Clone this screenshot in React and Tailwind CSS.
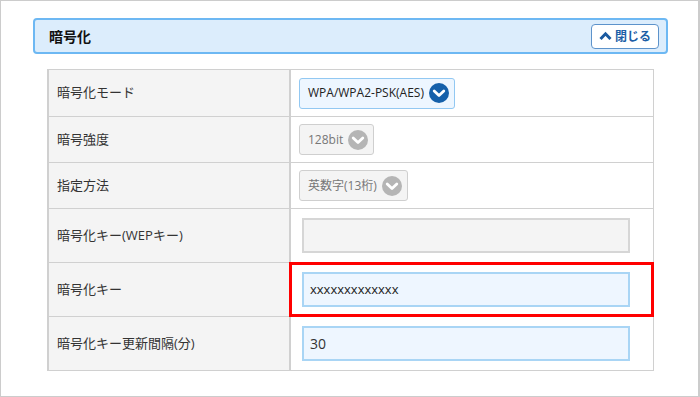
import React from 'react';

const FONT = { fontFamily: '"Open Sans", "Noto Sans CJK JP", sans-serif' };

const ChevronCircle = ({ active }) => (
  <svg width="20" height="20" viewBox="0 0 20 20" className="shrink-0">
    <circle cx="10" cy="10" r="10" fill={active ? '#1560aa' : '#b5b5b5'} />
    <polyline points="5.2,8 10,12.6 14.8,8" fill="none" stroke="#fff" strokeWidth="2.8" strokeLinecap="round" strokeLinejoin="round" />
  </svg>
);

const Select = ({ label, active }) => (
  <div className={`h-[31px] inline-flex items-center gap-[5px] pl-[8px] pr-[5px] rounded-[3px] border text-[12px] ${active ? 'bg-[#edf6ff] border-[#92c8f2] text-[#222]' : 'bg-[#f4f4f4] border-[#cfcfcf] text-[#777]'}`}>
    <span>{label}</span>
    <ChevronCircle active={active} />
  </div>
);

const Input = ({ value, disabled, mono }) => (
  <div className={`w-[328px] h-[35px] flex items-center px-[6px] border-2 ${disabled ? 'bg-[#f4f4f4] border-[#d6d6d6]' : 'bg-[#eef6ff] border-[#a9d5f5]'} ${mono ? 'text-[13px] text-[#222]' : 'text-[14px] text-[#333]'}`}>
    {value}
  </div>
);

const Row = ({ label, height, first, highlight, children }) => (
  <div className={`flex ${first ? '' : 'border-t border-[#d0d0d0]'}`} style={{ height }}>
    <div className="w-[242px] shrink-0 bg-[#f4f4f4] border-r-2 border-[#d0d0d0] flex items-center pl-[8px] text-[13px] text-[#333]">
      {label}
    </div>
    <div className="relative flex-1 flex items-center pl-[8px] bg-white">
      {children}
      {highlight && <div className="absolute -left-[2px] -right-px -top-px -bottom-px border-[3px] border-[#ff0000] pointer-events-none" />}
    </div>
  </div>
);

export default function App() {
  return (
    <div style={FONT} className="w-[700px] h-[397px] bg-white border border-[#cccccc] border-r-2 pt-[17px] pl-[32px] pr-[30px]">
      <div className="h-[36px] rounded-[4px] border-2 border-[#6db8f3] bg-[#dcedfc] flex items-center justify-between pl-[14px] pr-[7px]">
        <span className="text-[14px] font-bold text-[#111]" style={{ fontFamily: '"Noto Sans CJK JP", sans-serif' }}>暗号化</span>
        <button className="h-[25px] w-[68px] rounded-[4px] border border-[#5d93cb] bg-white flex items-center justify-center gap-[3px] text-[12px] font-bold text-[#1d5ea6]" style={{ fontFamily: '"Noto Sans CJK JP", sans-serif' }}>
          <svg width="13" height="10" viewBox="0 0 13 10">
            <polyline points="1.5,8 6.5,2.8 11.5,8" fill="none" stroke="#1a5aa0" strokeWidth="3" strokeLinejoin="miter" />
          </svg>
          <span>閉じる</span>
        </button>
      </div>

      <div className="mt-[15px] ml-[14px] mr-[14px] border border-l-2 border-[#d0d0d0]">
        <Row label="暗号化モード" height={46} first>
          <Select label="WPA/WPA2-PSK(AES)" active />
        </Row>
        <Row label="暗号強度" height={46}>
          <Select label="128bit" />
        </Row>
        <Row label="指定方法" height={46}>
          <Select label="英数字(13桁)" />
        </Row>
        <Row label="暗号化キー(WEPキー)" height={54}>
          <div className="pl-[3px]"><Input value="" disabled /></div>
        </Row>
        <Row label="暗号化キー" height={54} highlight>
          <div className="pl-[3px]"><Input value="xxxxxxxxxxxxx" mono /></div>
        </Row>
        <Row label="暗号化キー更新間隔(分)" height={54}>
          <div className="pl-[3px]"><Input value="30" /></div>
        </Row>
      </div>
    </div>
  );
}
